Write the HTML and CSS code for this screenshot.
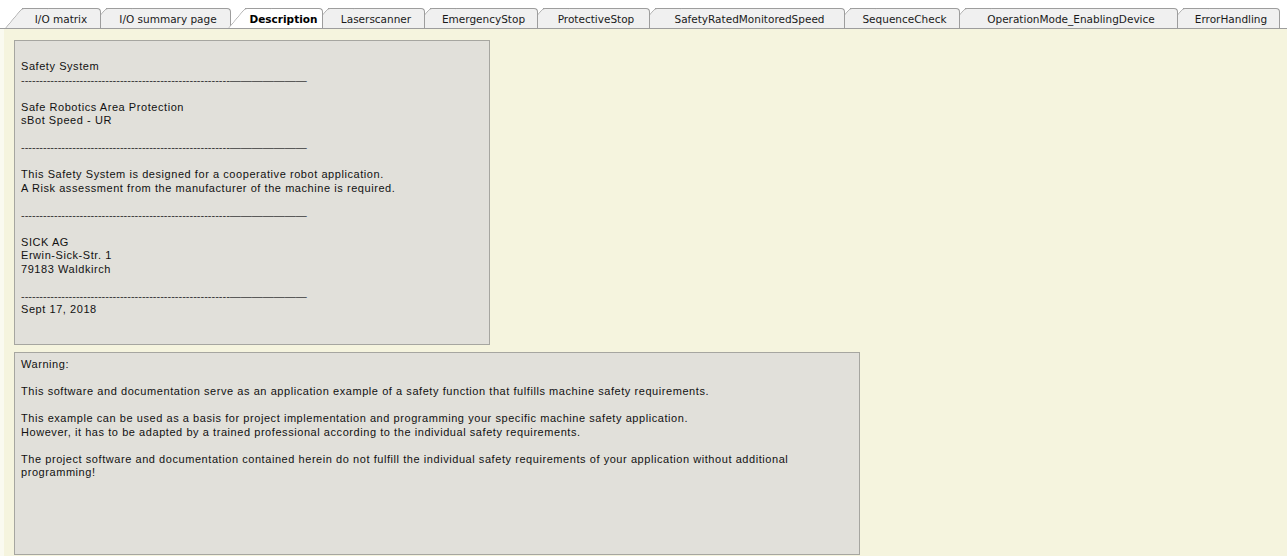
FILE: index.html
```html
<!DOCTYPE html>
<html lang="en">
<head>
<meta charset="utf-8">
<title>Description</title>
<link rel="stylesheet" href="styles.css">
</head>
<body>
<nav class="sheet-tabs">
  <div class="tab">I/O matrix</div>
  <div class="tab">I/O summary page</div>
  <div class="tab tab-active">Description</div>
  <div class="tab">Laserscanner</div>
  <div class="tab">EmergencyStop</div>
  <div class="tab">ProtectiveStop</div>
  <div class="tab">SafetyRatedMonitoredSpeed</div>
  <div class="tab">SequenceCheck</div>
  <div class="tab">OperationMode_EnablingDevice</div>
  <div class="tab">ErrorHandling</div>
</nav>
<main class="sheet">
  <section class="note note-info">
    <p>Safety System</p>
    <p class="rule">---------------------------------------------------------<span class="rule-solid">———————</span></p>
    <p class="sp">Safe Robotics Area Protection<br>sBot Speed - UR</p>
    <p class="rule sp">---------------------------------------------------------<span class="rule-solid">———————</span></p>
    <p class="sp">This Safety System is designed for a cooperative robot application.<br>A Risk assessment from the manufacturer of the machine is required.</p>
    <p class="rule sp">---------------------------------------------------------<span class="rule-solid">———————</span></p>
    <p class="sp">SICK AG<br>Erwin-Sick-Str. 1<br>79183 Waldkirch</p>
    <p class="rule sp">---------------------------------------------------------<span class="rule-solid">———————</span></p>
    <p>Sept 17, 2018</p>
  </section>
  <section class="note note-warning">
    <p>Warning:</p>
    <p class="sp">This software and documentation serve as an application example of a safety function that fulfills machine safety requirements.</p>
    <p class="sp">This example can be used as a basis for project implementation and programming your specific machine safety application.<br>However, it has to be adapted by a trained professional according to the individual safety requirements.</p>
    <p class="sp">The project software and documentation contained herein do not fulfill the individual safety requirements of your application without additional<br>programming!</p>
  </section>
</main>
</body>
</html>
```

FILE: styles.css
```css
html,
body {
  margin: 0;
  height: 100%;
}

body {
  background: #ffffff;
  color: #000000;
  font-family: "Liberation Sans", Arial, sans-serif;
  font-size: 11px;
  overflow: hidden;
  display: flex;
  flex-direction: column;
}

/* Worksheet tab strip */
.sheet-tabs {
  display: grid;
  grid-template-columns: 79px 125px 87px 97px 108px 107px 190px 110px 213px 97px;
  column-gap: 5px;
  padding: 8px 0 0 22px;
  height: 20px;
  border-bottom: 1px solid #9d9d9d;
  background: #ffffff;
  flex: none;
}

.tab {
  position: relative;
  display: flex;
  align-items: center;
  justify-content: center;
  background: #f0f0f0;
  border-top: 1px solid #9d9d9d;
  border-right: 1px solid #9d9d9d;
  border-top-right-radius: 4px;
  font-family: "DejaVu Sans", Tahoma, sans-serif;
  font-size: 10.5px;
  color: #1a1a1a;
  white-space: nowrap;
}

/* slanted left edge of each tab */
.tab::before {
  content: "";
  position: absolute;
  top: -1px;
  bottom: 0;
  left: -17px;
  width: 26px;
  background: inherit;
  border-top: 1px solid #9d9d9d;
  border-left: 1px solid #9d9d9d;
  border-top-left-radius: 3px;
  transform: skewX(-40deg);
  transform-origin: 0 100%;
  z-index: -1;
}

.tab:nth-child(1) { z-index: 10; }
.tab:nth-child(2) { z-index: 9; }
.tab:nth-child(3) { z-index: 8; }
.tab:nth-child(4) { z-index: 7; }
.tab:nth-child(5) { z-index: 6; }
.tab:nth-child(6) { z-index: 5; }
.tab:nth-child(7) { z-index: 4; }
.tab:nth-child(8) { z-index: 3; }
.tab:nth-child(9) { z-index: 2; }
.tab:nth-child(10) { z-index: 1; }

.tab-active {
  margin-left: 9px;
  background: #ffffff;
  font-weight: bold;
  color: #000000;
  z-index: 20 !important;
}

/* Sheet area */
.sheet {
  flex: 1;
  background: #f5f4de;
  border-left: 4px solid #fafaf0;
  padding: 11px 0 0 10px;
  display: flex;
  flex-direction: column;
  align-items: flex-start;
  gap: 7px;
}

.note {
  box-sizing: border-box;
  background: #e1e0da;
  border: 1px solid #a6a6a0;
  padding: 5px 6px 4px;
  line-height: 13.5px;
  letter-spacing: 0.56px;
  color: #111111;
}

.note p {
  margin: 0;
}

.note .sp {
  margin-top: 13.5px;
}

.note .rule {
  letter-spacing: 0;
  color: #333333;
}

.rule-solid {
  color: #3c3c3c;
  letter-spacing: 0;
}

.note-info {
  width: 476px;
  height: 305px;
  padding-top: 19px;
}

.note-warning {
  width: 846px;
  height: 203px;
}
```
